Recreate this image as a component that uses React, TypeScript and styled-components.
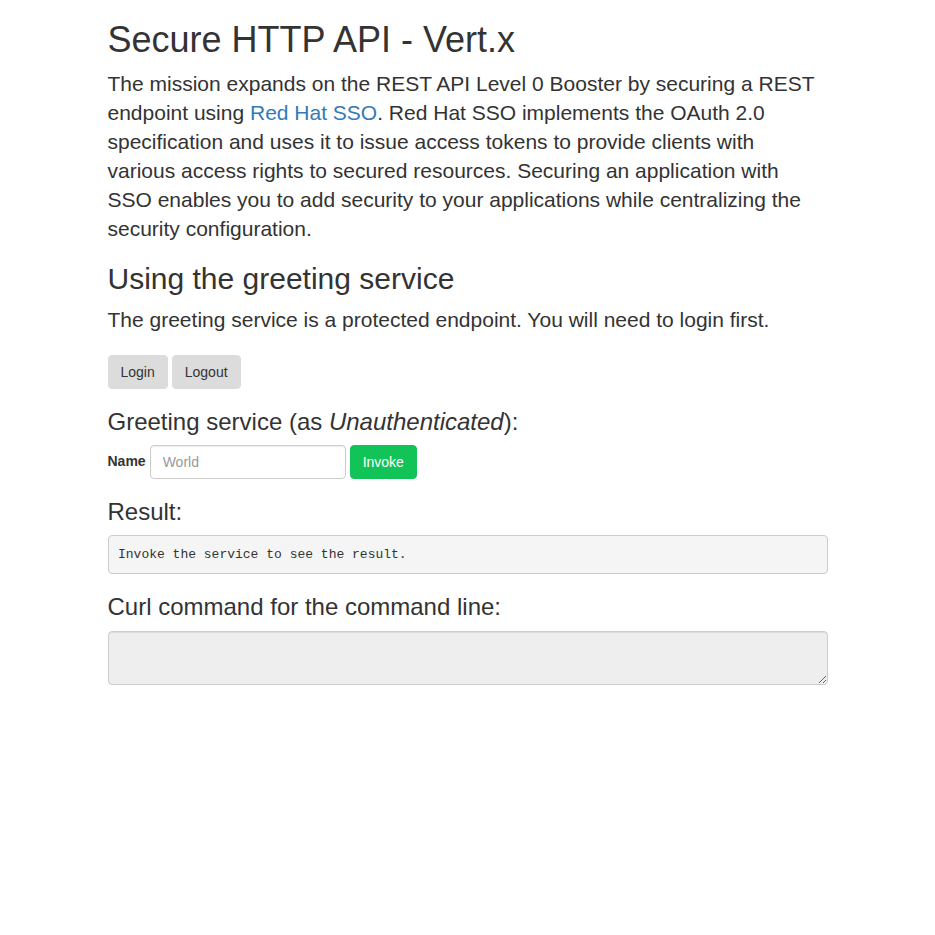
import React from 'react';
import styled, { createGlobalStyle } from 'styled-components';

const GlobalStyle = createGlobalStyle`
  html, body {
    margin: 0;
    padding: 0;
    background: #fff;
  }
  body {
    font-family: "Liberation Sans", Arial, Helvetica, sans-serif;
    font-size: 14px;
    line-height: 1.42857143;
    color: #333;
  }
  * {
    box-sizing: border-box;
  }
`;

const App = () => {
    return (
        <>
            <GlobalStyle />
            <Container>
                <Title>Secure HTTP API - Vert.x</Title>
                <Lead>
                    The mission expands on the REST API Level 0 Booster by securing a REST endpoint using{' '}
                    <Link href="#">Red Hat SSO</Link>. Red Hat SSO implements the OAuth 2.0 specification and
                    uses it to issue access tokens to provide clients with various access rights to secured
                    resources. Securing an application with SSO enables you to add security to your applications
                    while centralizing the security configuration.
                </Lead>

                <SubTitle>Using the greeting service</SubTitle>
                <Lead>The greeting service is a protected endpoint. You will need to login first.</Lead>

                <ButtonRow>
                    <Button>Login</Button>
                    <Button>Logout</Button>
                </ButtonRow>

                <Section>
                    Greeting service (as <em>Unauthenticated</em>):
                </Section>
                <InlineForm onSubmit={(e) => e.preventDefault()}>
                    <Label htmlFor="name">Name</Label>
                    <Input id="name" type="text" placeholder="World" />
                    <Button type="submit" $variant="success">Invoke</Button>
                </InlineForm>

                <Section>Result:</Section>
                <Pre>Invoke the service to see the result.</Pre>

                <Section>Curl command for the command line:</Section>
                <TextArea rows={2} readOnly />
            </Container>
        </>
    );
};

export default App;

// Styled Components
const Container = styled.div`
  width: 750px;
  margin: 0 auto;
  padding: 0 15px;
`;

const Title = styled.h1`
  font-size: 36px;
  font-weight: 500;
  line-height: 1.1;
  margin: 20px 0 9px;
`;

const SubTitle = styled.h2`
  font-size: 30px;
  font-weight: 500;
  line-height: 32px;
  margin: 20px 0 10px;
`;

const Section = styled.h3`
  font-size: 24px;
  font-weight: 500;
  line-height: 1.1;
  margin: 20px 0 10px;

  em {
    font-style: italic;
  }
`;

const Lead = styled.p`
  font-size: 21px;
  font-weight: 300;
  line-height: 29px;
  margin: 0 0 20px;
`;

const Link = styled.a`
  color: #337ab7;
  text-decoration: none;
`;

const ButtonRow = styled.div`
  display: flex;
  gap: 4px;
  padding-top: 1px;
`;

const Button = styled.button<{ $variant?: 'default' | 'success' }>`
  display: inline-block;
  height: 34px;
  padding: 6px 12px;
  font-family: inherit;
  font-size: 14px;
  line-height: 20px;
  border-radius: 4px;
  cursor: pointer;
  border: 1px solid ${(p) => (p.$variant === 'success' ? '#12c458' : '#dcdcdc')};
  background: ${(p) => (p.$variant === 'success' ? '#12c458' : '#dcdcdc')};
  color: ${(p) => (p.$variant === 'success' ? '#fff' : '#333')};
`;

const InlineForm = styled.form`
  display: flex;
  align-items: center;
  gap: 4px;
  margin: 0;
`;

const Label = styled.label`
  font-weight: 700;
  font-size: 14px;
  margin-bottom: 2px;
`;

const Input = styled.input`
  width: 196px;
  height: 34px;
  padding: 6px 12px;
  font-family: inherit;
  font-size: 14px;
  line-height: 20px;
  color: #555;
  border: 1px solid #ccc;
  border-radius: 4px;
  box-shadow: inset 0 1px 1px rgba(0, 0, 0, 0.075);

  &::placeholder {
    color: #999;
  }
`;

const Pre = styled.pre`
  display: block;
  margin: 0 0 10px;
  padding: 9.5px;
  font-family: "Liberation Mono", "Courier New", monospace;
  font-size: 13px;
  line-height: 18px;
  color: #333;
  background-color: #f5f5f5;
  border: 1px solid #ccc;
  border-radius: 4px;
`;

const TextArea = styled.textarea`
  display: block;
  width: 100%;
  height: 54px;
  padding: 6px 12px;
  font-family: inherit;
  font-size: 14px;
  line-height: 20px;
  background-color: #eee;
  border: 1px solid #ccc;
  border-radius: 4px;
  box-shadow: inset 0 1px 1px rgba(0, 0, 0, 0.075);
`;
